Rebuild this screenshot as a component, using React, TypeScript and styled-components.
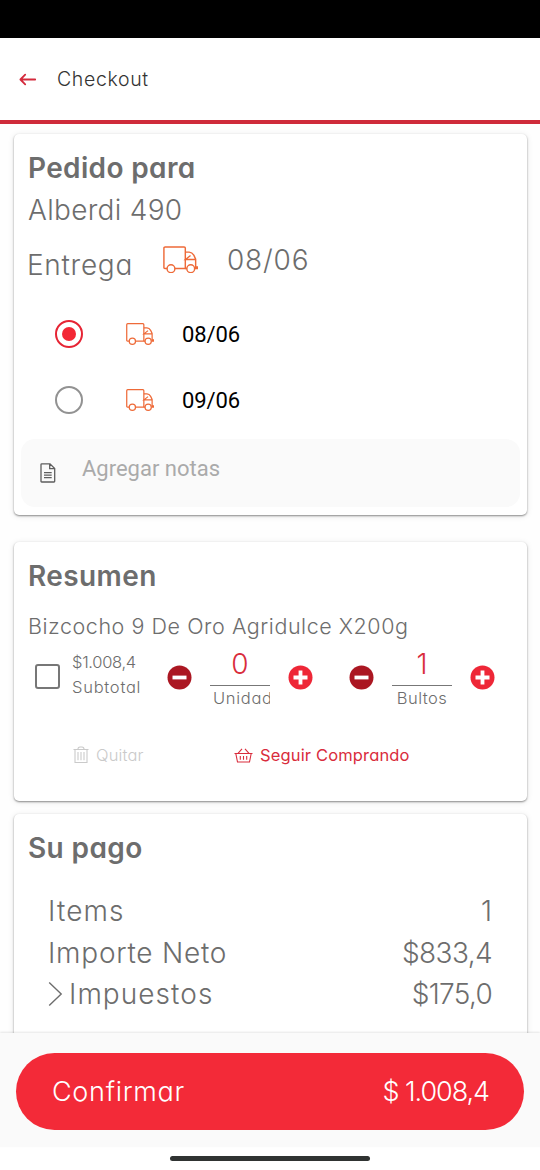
import React from "react";
import styled, { createGlobalStyle } from "styled-components";

const Global = createGlobalStyle`
  * { box-sizing: border-box; }
  body { margin: 0; background: #fefefe; }
`;

const Screen = styled.div`
  width: 540px;
  height: 1170px;
  display: flex;
  flex-direction: column;
  overflow: hidden;
  background: #fefefe;
  color: #6d6d6d;
  font-family: Inter, "Open Sans", sans-serif;
  font-feature-settings: "cv11";
  font-weight: 300;
`;

const StatusBar = styled.div`
  flex: none;
  height: 38px;
  background: #000;
`;

const Header = styled.header`
  flex: none;
  height: 86px;
  display: flex;
  align-items: center;
  gap: 20px;
  padding-left: 19px;
  background: #fff;
  border-bottom: 4px solid #cf2b3a;
`;

const Content = styled.main`
  flex: none;
  height: 909px;
  padding: 10px 13px 0 14px;
  overflow: hidden;
`;

const Card = styled.section<{ $h: number; $gap: number }>`
  height: ${(p) => p.$h}px;
  margin-bottom: ${(p) => p.$gap}px;
  padding: 13px 0 0 14px;
  background: #fff;
  border-radius: 5px;
  box-shadow: 0 1px 2px rgba(0, 0, 0, 0.42), 0 1px 6px rgba(0, 0, 0, 0.1);
`;

const Text = styled.span<{ $size: number; $ls?: number; $color?: string; $weight?: number }>`
  display: block;
  white-space: nowrap;
  font-size: ${(p) => p.$size}px;
  letter-spacing: ${(p) => p.$ls ?? 0}px;
  font-weight: ${(p) => p.$weight ?? 330};
  color: ${(p) => p.$color ?? "inherit"};
`;

const Title = styled.h2<{ $ls: number }>`
  margin: 0;
  font-size: 28px;
  line-height: 42px;
  font-weight: 600;
  letter-spacing: ${(p) => p.$ls}px;
`;

const Address = styled(Text)`
  line-height: 42px;
`;

const DeliveryRow = styled.div`
  display: flex;
  height: 70px;
  align-items: center;
`;

const DeliveryLabel = styled.div`
  width: 135px;
  margin: -2px 1px 0 -1px;
`;

const DeliveryValue = styled.div`
  display: flex;
  align-items: center;
  gap: 29px;
  padding-bottom: 13px;
`;

const Option = styled.label`
  display: flex;
  align-items: center;
  height: 66px;
  padding-left: 27px;
  font-family: Roboto, sans-serif;
`;

const Radio = styled.span<{ $on?: boolean }>`
  display: grid;
  place-items: center;
  width: 28px;
  height: 28px;
  margin-right: 43px;
  border-radius: 50%;
  border: 2px solid ${(p) => (p.$on ? "#e62434" : "#929292")};
  &::after {
    content: "";
    width: 14px;
    height: 14px;
    border-radius: 50%;
    background: ${(p) => (p.$on ? "#f32735" : "transparent")};
  }
`;

const OptionDate = styled(Text)`
  margin-left: 28px;
`;

const Notes = styled.div`
  display: flex;
  align-items: center;
  height: 68px;
  margin: 6px 7px 0 -7px;
  padding-left: 19px;
  gap: 26px;
  background: #fafafa;
  border-radius: 14px;
  font-family: Roboto, sans-serif;
  svg { margin-top: -1px; }
`;

const NotesHint = styled(Text)`
  margin-top: -9px;
`;

const ProductName = styled(Text)`
  margin: 12px 0 0;
  line-height: 34px;
`;

const ProductRow = styled.div`
  display: flex;
  height: 68px;
  align-items: flex-start;
  padding-top: 2px;
`;

const Checkbox = styled.span`
  flex: none;
  width: 25px;
  height: 25px;
  margin: 19px 12px 0 7px;
  border: 2px solid #777;
  border-radius: 3px;
`;

const Subtotal = styled.div`
  flex: none;
  width: 95px;
  padding-top: 5px;
  line-height: 25px;
`;

const Stepper = styled.div`
  flex: none;
  display: flex;
  width: 182px;
  align-items: flex-start;
  > svg { margin-top: 20px; flex: none; }
`;

const Quantity = styled.div`
  flex: none;
  width: 60px;
  margin: 0 18px 0 18px;
  display: flex;
  flex-direction: column;
  align-items: center;
`;

const QuantityValue = styled(Text)`
  width: 100%;
  height: 41px;
  line-height: 38px;
  text-align: center;
  border-bottom: 1px solid #777;
`;

const QuantityUnit = styled(Text)<{ $clip?: boolean }>`
  width: ${(p) => (p.$clip ? "57px" : "auto")};
  align-self: ${(p) => (p.$clip ? "flex-end" : "center")};
  overflow: hidden;
  line-height: 25px;
`;

const Actions = styled.div`
  display: flex;
  padding: 31px 0 0 45px;
`;

const Action = styled.div<{ $w: number; $gap: number }>`
  display: flex;
  align-items: center;
  width: ${(p) => p.$w}px;
  height: 26px;
  gap: ${(p) => p.$gap}px;
`;

const Totals = styled.div`
  padding: 21.5px 35px 0 20px;
`;

const TotalRow = styled.div`
  display: flex;
  align-items: center;
  justify-content: space-between;
  height: 41.5px;
`;

const Expandable = styled.div`
  display: flex;
  align-items: center;
  gap: 6px;
`;

const Footer = styled.footer`
  flex: none;
  height: 114px;
  padding: 20px 16px 0;
  background: #fafafa;
  box-shadow: 0 -1px 2px rgba(0, 0, 0, 0.1);
  z-index: 1;
`;

const Confirm = styled.button`
  display: flex;
  align-items: center;
  justify-content: space-between;
  width: 508px;
  height: 77px;
  padding: 0 35px 1px 36px;
  border: 0;
  border-radius: 39px;
  background: #f32a38;
  color: #fff;
  font-family: inherit;
  font-feature-settings: inherit;
`;

const HomeArea = styled.div`
  flex: 1;
  background: #fff;
  display: flex;
  justify-content: center;
  padding-top: 9px;
`;

const HomeBar = styled.div`
  width: 200px;
  height: 5px;
  border-radius: 3px;
  background: #303332;
`;

const Truck = ({ w, stroke }: { w: number; stroke: number }) => (
  <svg width={w} height={w * 0.79} viewBox="0 0 34 27" fill="none" stroke="#ee6a38" strokeWidth={stroke}>
    <path d="M4 22H1.8Q.8 22 .8 21V2Q.8 .9 2 .9H20.5Q21.7 .9 21.7 2V22H11.5" />
    <path d="M21.7 6H25.5Q28.3 6.2 30 9L31.8 12.8V20.5H33.8V22H31M23.3 22H21.7M32 13.2H21.9L26.8 9.3" />
    <circle cx="7.7" cy="22.2" r="3.8" />
    <circle cx="27" cy="22.2" r="3.8" />
  </svg>
);

const BackArrow = () => (
  <svg width="18" height="14" viewBox="0 0 18 14" fill="none" stroke="#d42a3c" strokeWidth="1.8" strokeLinecap="round" strokeLinejoin="round">
    <path d="M16.2 7.5H1.5M6.2 2.7L1.4 7.5L6.2 12.3" />
  </svg>
);

const NoteIcon = () => (
  <svg width="16" height="20" viewBox="0 0 16 20" fill="none" stroke="#5e5e5e" strokeWidth="1.3">
    <path d="M1 1.5Q1 .8 1.7 .8H10L14.7 5.5V18.3Q14.7 19 14 19H1.7Q1 19 1 18.3ZM9.7 1V5.7H14.5M4 9.7H11.7M4 12.2H11.7M4 14.7H11.7" />
  </svg>
);

const Round = ({ plus }: { plus?: boolean }) => (
  <svg width="25" height="25" viewBox="0 0 25 25">
    <circle cx="12.5" cy="12.5" r="12" fill={plus ? "#ee2737" : "#ab1722"} />
    <path d={plus ? "M5.5 12.5H19.5M12.5 5.5V19.5" : "M5.5 12.5H19.5"} stroke="#fff" strokeWidth="3.8" />
  </svg>
);

const TrashIcon = () => (
  <svg width="16" height="18" viewBox="0 0 16 18" fill="none" stroke="#cacaca" strokeWidth="1.1">
    <path d="M.5 3.5H15.5M2 3.5V16.5H14V3.5M5 3.3Q5 1 7 1H9Q11 1 11 3.3M5 6V14.3M8 6V14.3M11 6V14.3" />
  </svg>
);

const BasketIcon = () => (
  <svg width="19" height="15" viewBox="0 0 19 15" fill="none" stroke="#d92c3c" strokeWidth="1.1">
    <path d="M.5 5.5H18.5M1.8 5.5L3.5 14H15.5L17.2 5.5M4 5.3L8 .8M15 5.3L11 .8M6.3 8V11.8M9.5 8V11.8M12.7 8V11.8" />
  </svg>
);

const Chevron = () => (
  <svg width="15" height="26" viewBox="0 0 15 26" fill="none" stroke="#6d6d6d" strokeWidth="1.4">
    <path d="M1.2 1.5L13.2 13L1.2 24.5" />
  </svg>
);

export default function App() {
  return (
    <Screen>
      <Global />
      <StatusBar />
      <Header>
        <BackArrow />
        <Text $size={19.5} $ls={0.65} $color="#333" $weight={360}>Checkout</Text>
      </Header>
      <Content>
        <Card $h={381} $gap={27}>
          <Title $ls={0.35}>Pedido para</Title>
          <Address $size={28} $ls={0.3}>Alberdi 490</Address>
          <DeliveryRow>
            <DeliveryLabel><Text $size={28} $ls={0.7}>Entrega</Text></DeliveryLabel>
            <DeliveryValue>
              <Truck w={35} stroke={1.4} />
              <Text $size={28} $ls={0.8}>08/06</Text>
            </DeliveryValue>
          </DeliveryRow>
          <Option>
            <Radio $on />
            <Truck w={28} stroke={1.5} />
            <OptionDate $size={22} $color="#000" $weight={400} $ls={-0.1}>08/06</OptionDate>
          </Option>
          <Option>
            <Radio />
            <Truck w={28} stroke={1.5} />
            <OptionDate $size={22} $color="#000" $weight={400} $ls={-0.1}>09/06</OptionDate>
          </Option>
          <Notes>
            <NoteIcon />
            <NotesHint $size={22} $color="#aaa" $weight={400}>Agregar notas</NotesHint>
          </Notes>
        </Card>
        <Card $h={259} $gap={13}>
          <Title $ls={0.4}>Resumen</Title>
          <ProductName $size={21.5} $ls={0.55}>Bizcocho 9 De Oro Agridulce X200g</ProductName>
          <ProductRow>
            <Checkbox />
            <Subtotal>
              <Text $size={16.5} $ls={-0.3}>$1.008,4</Text>
              <Text $size={16.5} $ls={0.75}>Subtotal</Text>
            </Subtotal>
            <Stepper>
              <Round />
              <Quantity>
                <QuantityValue $size={28} $color="#d92c3c">0</QuantityValue>
                <QuantityUnit $size={16.5} $ls={0.7} $clip>Unidad</QuantityUnit>
              </Quantity>
              <Round plus />
            </Stepper>
            <Stepper>
              <Round />
              <Quantity>
                <QuantityValue $size={28} $color="#d92c3c">1</QuantityValue>
                <QuantityUnit $size={16.5} $ls={0.45}>Bultos</QuantityUnit>
              </Quantity>
              <Round plus />
            </Stepper>
          </ProductRow>
          <Actions>
            <Action $w={161} $gap={7}>
              <TrashIcon />
              <Text $size={16.5} $ls={0.15} $color="#cacaca">Quitar</Text>
            </Action>
            <Action $w={180} $gap={7}>
              <BasketIcon />
              <Text $size={16.5} $ls={0.15} $color="#d92c3c" $weight={380}>Seguir Comprando</Text>
            </Action>
          </Actions>
        </Card>
        <Card $h={300} $gap={0}>
          <Title $ls={0.4}>Su pago</Title>
          <Totals>
            <TotalRow>
              <Text $size={28} $ls={1.1}>Items</Text>
              <Text $size={28}>1</Text>
            </TotalRow>
            <TotalRow>
              <Text $size={28} $ls={0.75}>Importe Neto</Text>
              <Text $size={28} $ls={-0.6}>$833,4</Text>
            </TotalRow>
            <TotalRow>
              <Expandable>
                <Chevron />
                <Text $size={28} $ls={1.05}>Impuestos</Text>
              </Expandable>
              <Text $size={28} $ls={-0.7}>$175,0</Text>
            </TotalRow>
          </Totals>
        </Card>
      </Content>
      <Footer>
        <Confirm>
          <Text $size={27} $ls={0.7}>Confirmar</Text>
          <Text $size={27} $ls={-1.05}>$ 1.008,4</Text>
        </Confirm>
      </Footer>
      <HomeArea>
        <HomeBar />
      </HomeArea>
    </Screen>
  );
}
